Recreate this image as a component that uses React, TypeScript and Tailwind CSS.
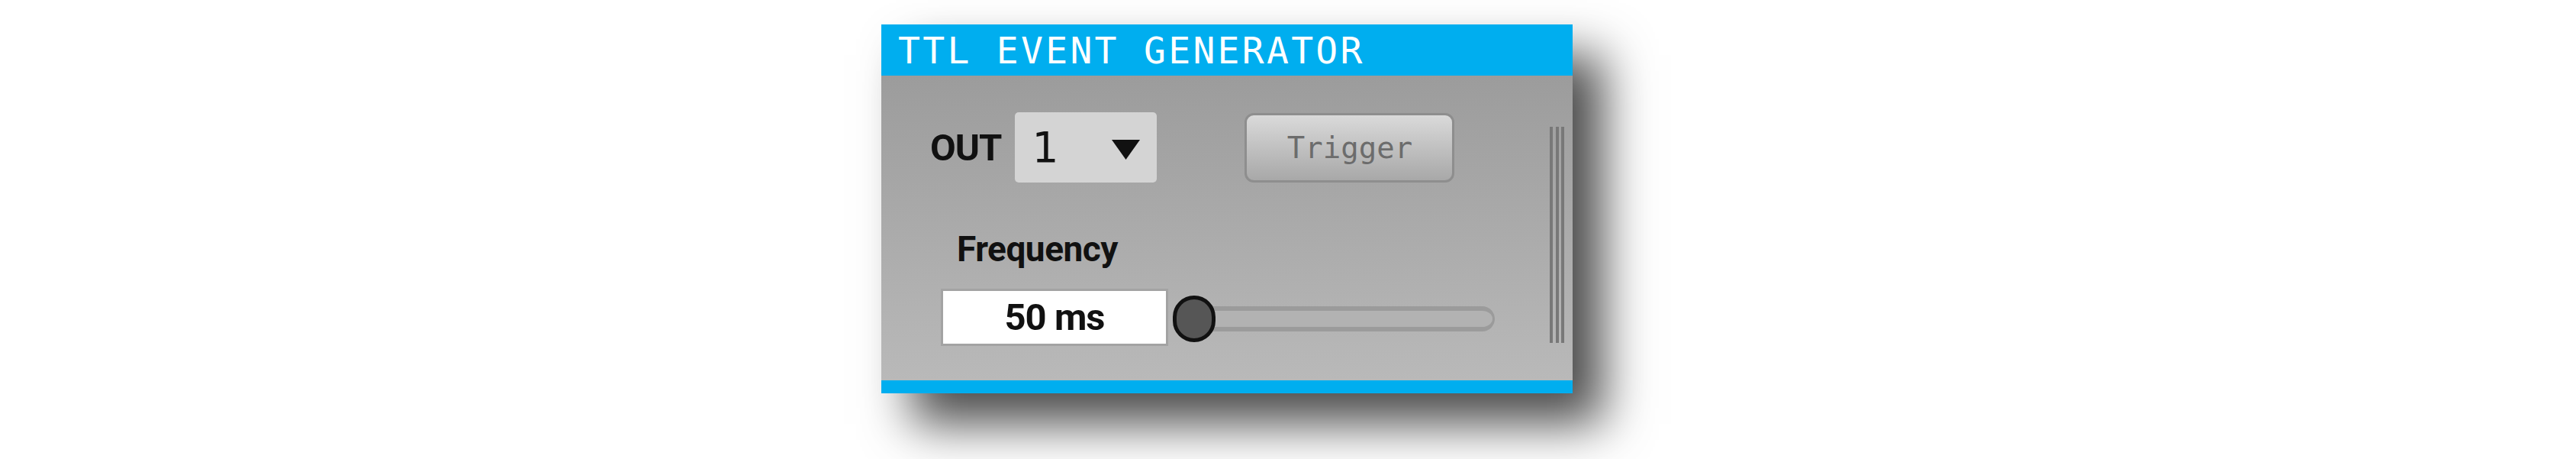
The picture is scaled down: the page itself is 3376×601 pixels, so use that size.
import React from 'react';

const mono = "font-['DejaVu_Sans_Mono','Liberation_Mono',monospace]";
const label = "font-['Roboto','DejaVu_Sans',sans-serif]";

const DropArrow = () => (
  <svg width="37" height="26" viewBox="0 0 37 26">
    <polygon points="0,0 37,0 18.5,26" fill="#111" />
  </svg>
);

const TtlEventGenerator = () => {
  return (
    <div className="w-[906px] h-[483px] flex flex-col shadow-[40px_40px_60px_rgba(0,0,0,0.7)]">
      {/* header */}
      <div className="h-[67px] bg-[#00aeef] pl-[22px] flex items-center">
        <span className={`${mono} text-[48px] leading-none tracking-[3.3px] text-white`}>
          TTL EVENT GENERATOR
        </span>
      </div>

      {/* body */}
      <div className="flex-1 flex bg-gradient-to-b from-[#9c9c9c] to-[#b9b9b9]">
        <div className="flex-1 flex flex-col pt-[48px] pl-[64px]">
          <div className="flex items-center h-[92px]">
            <span className={`${label} font-bold text-[49px] leading-none tracking-[-1px] text-[#111]`}>OUT</span>
            <div className="ml-[18px] w-[186px] h-[92px] bg-[#d4d4d4] rounded-[5px] flex items-center pl-[22px] pr-[22px]">
              <span className="font-['DejaVu_Sans',sans-serif] text-[55px] leading-none text-[#111]">1</span>
              <span className="ml-auto mt-[6px]">
                <DropArrow />
              </span>
            </div>
            <button className="ml-[115px] w-[275px] h-[91px] rounded-[12px] border-[3px] border-[#8e8e8e] bg-gradient-to-b from-[#dadada] to-[#a8a8a8] flex items-center justify-center">
              <span className={`${mono} text-[39px] leading-none text-[#6c6c6c]`}>Trigger</span>
            </button>
          </div>

          <div className={`${label} font-bold text-[46px] leading-[52px] tracking-[-0.5px] text-[#111] mt-[61px] ml-[35px]`}>
            Frequency
          </div>

          <div className="flex items-center mt-[26px] ml-[14px]">
            <div className="w-[298px] h-[75px] border-[3px] border-[#a3a3a3] bg-white flex items-center justify-center">
              <span className={`${label} font-bold text-[49px] leading-none tracking-[-1px] text-[#111]`}>50 ms</span>
            </div>
            <div className="relative ml-[6px] w-[422px] h-[61px] mt-[4px]">
              <div className="absolute left-[28px] right-0 top-[14px] h-[33px] border-y-[6px] border-r-[3px] border-[#9b9b9b] rounded-r-[17px] bg-[#b2b2b2]" />
              <div className="absolute left-0 top-0 w-[56px] h-[61px] rounded-full border-[5px] border-[#111] bg-[#565656]" />
            </div>
          </div>
        </div>

        <div className="mt-[67px] mr-[11px] h-[283px] flex gap-[4px]">
          <div className="w-[4px] bg-[#787878]" />
          <div className="w-[4px] bg-[#787878]" />
          <div className="w-[4px] bg-[#787878] -ml-[1px]" />
        </div>
      </div>

      {/* footer band */}
      <div className="h-[17px] bg-[#00aeef]" />
    </div>
  );
};

export default function App() {
  return (
    <div className="w-full h-[601px] bg-white pt-[32px] pl-[1155px]">
      <TtlEventGenerator />
    </div>
  );
}
